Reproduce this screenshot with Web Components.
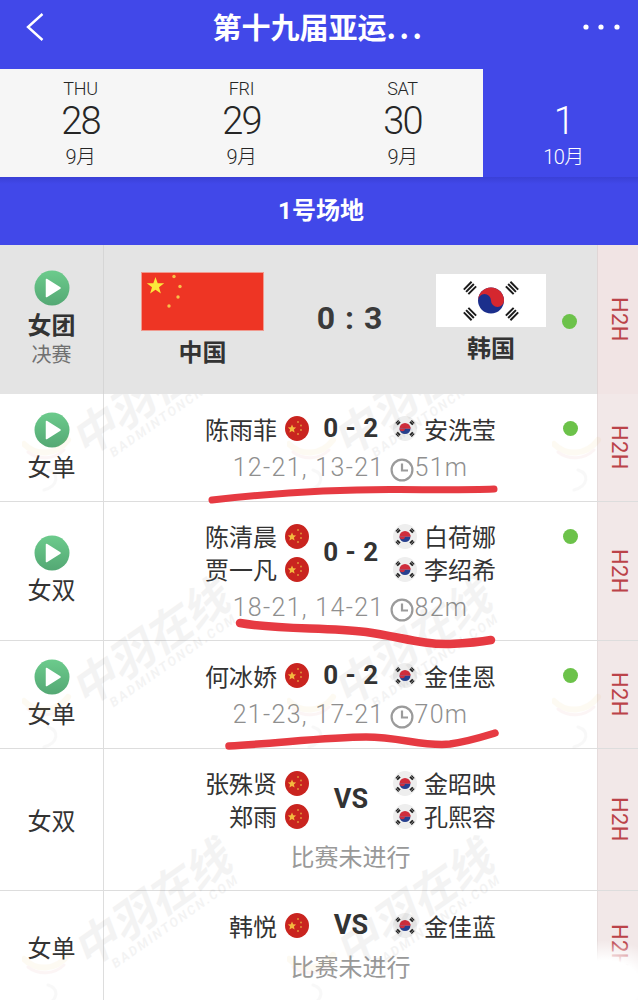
<!DOCTYPE html>
<html lang="zh"><head><meta charset="utf-8">
<style>
html,body{margin:0;padding:0;background:#fff}
body{width:638px;height:1000px;overflow:hidden;position:relative;font-family:Roboto,"Noto Sans CJK SC",sans-serif;color:#333}
#rows{position:relative}
</style></head><body>
<app-header title="第十九届亚运..."></app-header>
<date-strip></date-strip>
<court-bar>1号场地</court-bar>
<div id="rows">
<team-row></team-row>
<match-row h="108" play="1" label="女单" l="陈雨菲" r="安洗莹" s="0 - 2" sub="12-21, 13-21" t="51m"></match-row>
<match-row h="139" play="1" label="女双" l="陈清晨,贾一凡" r="白荷娜,李绍希" s="0 - 2" sub="18-21, 14-21" t="82m"></match-row>
<match-row h="108" play="1" label="女单" l="何冰娇" r="金佳恩" s="0 - 2" sub="21-23, 17-21" t="70m"></match-row>
<match-row h="142" label="女双" l="张殊贤,郑雨" r="金昭映,孔熙容" s="VS" sub="比赛未进行"></match-row>
<match-row h="112" label="女单" l="韩悦" r="金佳蓝" s="VS" sub="比赛未进行"></match-row>
<water-marks></water-marks>
</div>
<pen-marks></pen-marks>
<script>
const CJK='"Noto Sans CJK SC",sans-serif';
function def(name,css,html){
  customElements.define(name,class extends HTMLElement{
    connectedCallback(){
      if(this.shadowRoot)return;
      const s=this.attachShadow({mode:'open'});
      s.innerHTML='<style>'+css+'</style>'+(typeof html==='function'?html(this):html);
    }
  });
}
def('play-icon',':host{display:block;width:36px;height:36px}svg{display:block}',
`<svg width="36" height="36" viewBox="0 0 36 36"><defs><linearGradient id="g" x1="0" y1="0" x2="0" y2="1"><stop offset="0" stop-color="#6ccb8c"/><stop offset="1" stop-color="#54a874"/></linearGradient></defs><circle cx="18" cy="18" r="17.5" fill="url(#g)"/><path d="M12.5 9.5 L26 18 L12.5 26.5Z" fill="#fff" stroke="#fff" stroke-width="1.5" stroke-linejoin="round"/></svg>`);
def('mini-cn',':host{display:block;width:24px;height:25px}svg{display:block}',
`<svg width="24" height="25" viewBox="0 0 24 25"><ellipse cx="12" cy="12.500" rx="12" ry="12.500" fill="#c9241f"/><path d="M7 8.600l1.200 2.700 2.900.3-2.200 1.900.7 2.900L7 14.900l-2.600 1.500.7-2.900-2.200-1.900 2.900-.3z" fill="#f3b93f"/><g fill="#e0913a"><circle cx="13" cy="6" r="1"/><circle cx="16" cy="9.500" r="1"/><circle cx="16" cy="14" r="1"/><circle cx="13" cy="18" r="1"/></g></svg>`);
def('mini-kr',':host{display:block;width:24px;height:25px}svg{display:block}',
`<svg width="24" height="25" viewBox="0 0 24 25"><ellipse cx="12" cy="12.500" rx="12" ry="12.500" fill="#eeeeee"/><g stroke="#1d1d1d" stroke-width="4" fill="none"><path d="M3.800 5.500l2.400 2.400"/><path d="M20.200 5.500l-2.400 2.400"/><path d="M3.800 19.500l2.400-2.400"/><path d="M20.200 19.500l-2.400-2.400"/></g><g stroke="#eeeeee" stroke-width=".6" fill="none"><path d="M3 8.300l5-5"/><path d="M16 3.300l5 5"/><path d="M3 16.700l5 5"/><path d="M21 16.700l-5 5"/></g><path d="M6.500 12.500a5.500 5.500 0 0 1 11 0z" fill="#cf2d3c"/><path d="M6.500 12.500a5.500 5.500 0 0 0 11 0z" fill="#27408f"/><path d="M6.500 12.500a2.750 2.750 0 0 0 5.500 0a2.750 2.750 0 0 1 5.500 0z" fill="#cf2d3c"/></svg>`);
def('clock-icon',':host{display:inline-block;width:24px;height:24px;vertical-align:-6px}svg{display:block}',
`<svg width="24" height="24" viewBox="0 0 24 24" fill="none" stroke="#9b9b9b" stroke-width="2.200"><circle cx="12" cy="12" r="10.400"/><path d="M12 5.500V12.500H18"/></svg>`);
def('app-header',`:host{display:flex;height:69px;background:#4148e9;align-items:center;justify-content:center;position:relative;color:#fff}
h1{margin:0 0 18px;font:700 29px/40px ${CJK};letter-spacing:0}
h1 span{letter-spacing:3.500px}
.b,.m{position:absolute;top:0}
.b{left:26px;top:13px}.m{left:582px;top:24px}`,
h=>{const t=h.getAttribute('title');return `<svg class="b" width="18" height="28" viewBox="0 0 18 28" fill="none" stroke="#fff" stroke-width="2.400"><path d="M16.500 1 L2 14 L16.500 27"/></svg><h1>${t.replace('...','<span>...</span>')}</h1><svg class="m" width="38" height="6" viewBox="0 0 38 6" fill="#fff"><circle cx="4" cy="3" r="2.600"/><circle cx="19" cy="3" r="2.600"/><circle cx="35" cy="3" r="2.600"/></svg>`});
def('date-cell',`:host{display:flex;flex-direction:column;align-items:center;width:161px;height:108px;color:var(--c,#262626);box-sizing:border-box;padding-top:9px}
.w{font:300 18px/22px Roboto,sans-serif;height:22px;letter-spacing:-.3px}
.d{font:300 38px/42px Roboto,sans-serif;height:42px;letter-spacing:-1.800px}
.m{font:300 20px/28px Roboto,${CJK};margin-top:1px;letter-spacing:-.5px}`,
h=>`<div class="w">${h.getAttribute('w')||''}</div><div class="d">${h.getAttribute('d')}</div><div class="m">${h.getAttribute('m')}</div>`);
def('date-strip',`:host{display:block;background:#4148e9}
.r{display:flex;height:108px}
.a{display:flex;width:483px;background:#f6f6f6}
.c{--c:#fff}`,
`<div class="r"><div class="a"><date-cell w="THU" d="28" m="9月"></date-cell><date-cell w="FRI" d="29" m="9月"></date-cell><date-cell w="SAT" d="30" m="9月"></date-cell></div><div class="c"><date-cell d="1" m="10月"></date-cell></div></div>`);
def('court-bar',`:host{display:flex;height:68px;background:linear-gradient(#3a40d6 0,#4148e9 7px);align-items:center;justify-content:center;color:#fff;font:700 24px/30px Roboto,${CJK};box-sizing:border-box;padding-left:4px}`,`<slot></slot>`);
def('team-row',`:host{display:grid;grid-template-columns:104px 493px 41px;height:149px;background:#e4e4e4;position:relative;z-index:1;box-sizing:border-box;color:#333}
.l{border-right:1.500px solid #d6d6d6;display:flex;flex-direction:column;align-items:center;justify-content:center;padding-bottom:3px}
.l b{font:700 24px/36px ${CJK}}
.l i{font:400 20px/24px ${CJK};font-style:normal;color:#707070}
.m{display:grid;grid-template-columns:197px 98px 198px;align-items:center}
.t{display:flex;flex-direction:column;align-items:center;font:700 24px/32px ${CJK}}
.s{font:700 32px/40px Roboto,sans-serif;text-align:center;letter-spacing:1px;padding-bottom:4px;color:#3a3a3a}
.k{display:flex;align-items:center}
.k .t{width:147px;padding-left:37px;box-sizing:border-box}
.dot{width:15px;height:15px;border-radius:50%;background:#6cc24a;margin-left:16px;margin-top:3px}
.h{background:#f1e4e4;border-left:1px solid #e0d6d6;display:flex;align-items:center;justify-content:center}
.h span{writing-mode:vertical-rl;font:400 22px/24px Roboto,sans-serif;color:#bb4349;letter-spacing:.3px;padding-left:2px}`,
`<div class="l"><play-icon></play-icon><b>女团</b><i>决赛</i></div>
<div class="m"><div class="t" style="gap:4px;padding-bottom:1px"><svg width="123" height="59" viewBox="0 0 123 59"><rect x=".5" y=".5" width="122" height="58" fill="#ee3524" stroke="#f09a8f"/><path d="M14.500 5l2.200 6.200 6.500.1-5.200 4 1.900 6.300-5.400-3.800-5.400 3.800 1.900-6.300-5.200-4 6.500-.1z" fill="#fbe83a"/><g fill="#f7c14a"><circle cx="33" cy="4.500" r="1.700"/><circle cx="39" cy="14.500" r="1.700"/><circle cx="37" cy="25" r="1.700"/><circle cx="28" cy="34" r="1.700"/></g></svg><span>中国</span></div>
<div class="s">0 : 3</div>
<div class="k"><div class="t" style="gap:4px;padding-bottom:3px"><svg width="110" height="53" viewBox="0 0 110 53"><rect width="110" height="53" fill="#fff"/><circle cx="55" cy="26.500" r="13" fill="#1b2f8c"/><path d="M42 26.500a13 13 0 0 1 26 0a6.500 6.500 0 0 1-13 0a6.500 6.500 0 0 0-13 0z" fill="#d5272f"/><g stroke="#1c1c1c" stroke-width="11" stroke-dasharray="2 1.200" fill="none"><path d="M31 11l6 6"/><path d="M79 11l-6 6"/><path d="M31 43l6-6"/><path d="M79 43l-6-6"/></g></svg><span>韩国</span></div><div class="dot"></div></div></div>
<div class="h"><span>H2H</span></div>`);
def('match-row',`:host{display:grid;grid-template-columns:104px 493px 41px;box-sizing:border-box;border-bottom:1.500px solid #ddd;color:#333}
.l{border-right:1.500px solid #ddd;display:flex;flex-direction:column;align-items:center;justify-content:center}
.l span{font:400 24px/36px ${CJK}}
.m{padding-top:18px;box-sizing:border-box;text-align:center}
.g{display:grid;grid-template-columns:205px 84px 204px;align-items:center}
.p{display:flex;flex-direction:column;gap:1px}
.i{display:flex;align-items:center;height:32px;font:400 24px/32px ${CJK}}
.pl .i{justify-content:flex-end;gap:8px}
.pr .i{gap:7px}
.s{font:700 26px/32px Roboto,sans-serif;letter-spacing:.5px;white-space:nowrap;color:#333;padding-bottom:1px}
.s.v{font-size:27px;letter-spacing:0}
.dot{width:15px;height:15px;border-radius:50%;background:#6cc24a;margin-left:auto;margin-right:19px}
.u{font:300 25px/36px Roboto,sans-serif;color:#8f8f8f;letter-spacing:1.300px;margin-top:5px;white-space:nowrap}
.u.n{font:400 24px/36px ${CJK};letter-spacing:0;color:#999;margin-top:6px}
.h{background:#f2e8e8;border-left:1px solid #e6dcdc;display:flex;align-items:center;justify-content:center}
.h span{writing-mode:vertical-rl;font:400 22px/24px Roboto,sans-serif;color:#bb4349;letter-spacing:.3px;padding-left:2px}`,
h=>{
 const a=n=>h.getAttribute(n);
 h.style.height=a('h')+'px';
 const L=a('l').split(','),R=a('r').split(',');
 const dot=a('play')?'<div class="dot"></div>':'';
 return `<div class="l">${a('play')?'<play-icon></play-icon>':''}<span>${a('label')}</span></div>
 <div class="m"><div class="g"><div class="p pl">${L.map(n=>`<div class="i"><span>${n}</span><mini-cn></mini-cn></div>`).join('')}</div>
 <div class="s${a('s')=='VS'?' v':''}">${a('s')}</div>
 <div class="p pr">${R.map((n,i)=>`<div class="i"><mini-kr></mini-kr><span>${n}</span>${i==0?dot:''}</div>`).join('')}</div></div>
 ${a('t')?`<div class="u">${a('sub')}<span style="display:inline-block;width:6px"></span><clock-icon></clock-icon>${a('t')}</div>`:`<div class="u n">${a('sub')}</div>`}</div>
 <div class="h"><span>H2H</span></div>`;
});
def('water-marks',`:host{position:absolute;left:0;top:0;display:block;pointer-events:none}
.w{position:absolute;transform:rotate(-35deg);transform-origin:0 0;color:#333;opacity:.05;white-space:nowrap}
.w b{display:block;font:italic 700 45px/48px ${CJK};letter-spacing:0}
.w i{display:block;font:italic 700 13px/14px Roboto,sans-serif;letter-spacing:2px;margin-left:24px}
svg{position:absolute;opacity:.06}`,
()=>{
 const p=[[60,178],[322,178],[60,428],[322,428],[62,689],[324,689]];
 const q=[[22,185],[287,185],[552,185],[22,442],[287,442],[552,442],[22,700],[287,700]];
 return q.map(([x,y])=>`<svg style="left:${x}px;top:${y}px" width="50" height="62" viewBox="0 0 50 62" fill="none" stroke-linecap="round"><path d="M2 14C14 26 34 26 46 10" stroke="#e8b53a" stroke-width="6"/><path d="M6 22C16 30 32 30 42 20" stroke="#d06a6a" stroke-width="3"/><path d="M26 40C38 44 36 56 22 60" stroke="#999" stroke-width="3"/></svg>`).join('')+p.map(([x,y])=>`<div class="w" style="left:${x}px;top:${y}px"><b>中羽在线</b><i>BADMINTONCN.COM</i></div>`).join('');
});
def('pen-marks',`:host{position:absolute;left:0;top:0;display:block;width:638px;height:1000px;pointer-events:none;z-index:3;overflow:hidden}
svg{display:block}.g{position:absolute;left:540px;top:940px;width:98px;height:60px;background:radial-gradient(65px 45px at 65px 45px,#fff 55%,rgba(255,255,255,0))}`,
`<svg width="638" height="1000" fill="none" stroke="#e63a42" stroke-linecap="round"><path stroke-width="7" d="M212 500C265 494 335 489 400 489.500S470 490 494 489"/><path stroke-width="8.500" d="M240 623C280 630 325 627 366 632C400 637 425 645 450 644C470 643 480 642 491 640"/><path stroke-width="7.500" d="M229 746C280 743 330 737 366 737C400 737 425 747 450 744C470 741 482 737 495 733"/></svg><div class="g"></div>`);
</script>
</body></html>
